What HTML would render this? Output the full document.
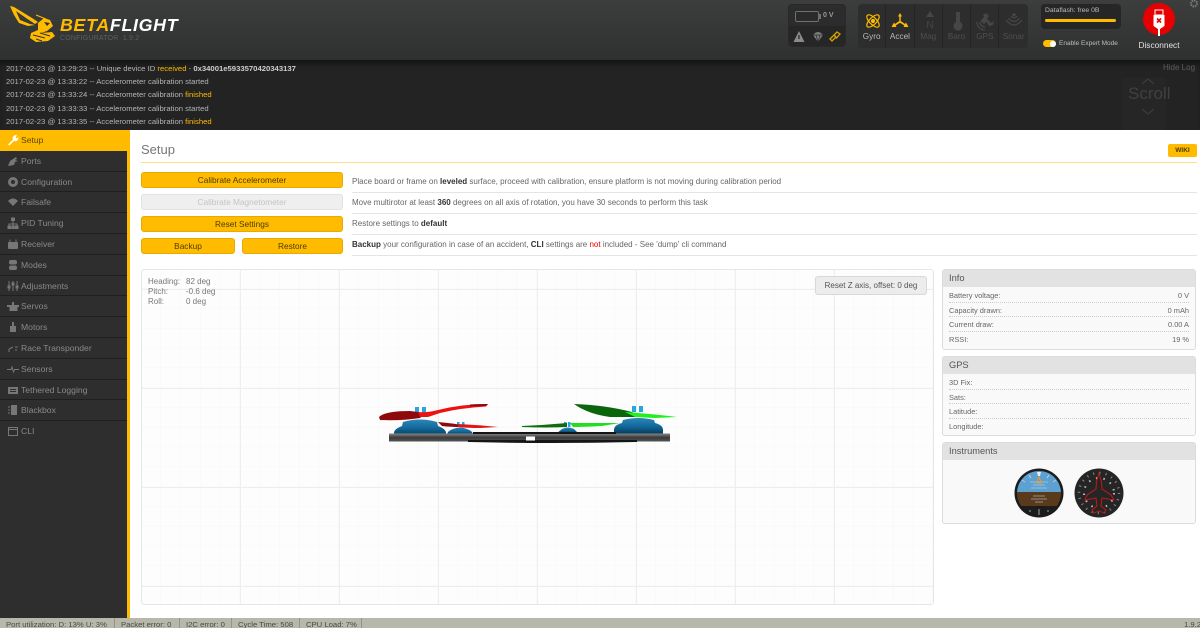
<!DOCTYPE html>
<html><head><meta charset="utf-8">
<style>
*{box-sizing:border-box}
html,body{margin:0;padding:0;width:1200px;height:628px;overflow:hidden;background:#fff;font-family:"Liberation Sans",sans-serif;font-size:8px;color:#555}
.a{position:absolute;white-space:nowrap}
#head{left:0;top:0;width:1200px;height:60px;background:linear-gradient(#3c3e3e,#2f3131)}
#log{left:0;top:60px;width:1200px;height:70px;background:#232323;box-shadow:inset 0 6px 6px -3px #111}
.l{position:absolute;left:6px;font-size:7.7px;line-height:13px;color:#b4b4b4;white-space:nowrap}
.l i{font-style:normal;color:#ffbb00}
.l b{color:#ccc}
#side{left:0;top:130px;width:130px;height:488px;background:#2e2e2e;border-right:3px solid #ffbb00}
.m{position:absolute;left:0;width:127px;height:20.8px;border-bottom:1px solid #1f1f1f;color:#8a8a8a;font-size:8.6px;line-height:21px;padding-left:21px;white-space:nowrap}
.m svg{position:absolute;left:7px;top:4px}
.btn{position:absolute;height:16px;background:#ffbb00;border:1px solid #e8aa00;border-radius:3px;color:#4a3c00;font-size:8.3px;line-height:14px;text-align:center}
.desc{position:absolute;left:352px;width:845px;height:21px;border-bottom:1px solid #e4e4e4;font-size:8px;line-height:20px;color:#666;white-space:nowrap}
.desc b{color:#333}
.panel{position:absolute;left:942px;width:254px;background:#f9f9f9;border:1px solid #dcdcdc;border-radius:3px;overflow:hidden}
.ph{height:17px;background:#e2e2e2;color:#555;font-size:9.3px;line-height:17px;padding-left:6px}
.r{position:absolute;left:6px;right:6px;height:14.5px;border-bottom:1px dotted #ccc;font-size:7.4px;line-height:15px;color:#666}
.r:last-child{border:0}
.r span{position:absolute;right:0}
.sen{position:absolute;top:0;width:28.3px;height:44px;border-right:1px solid #242424}
.sen div{position:absolute;left:0;right:0;top:28px;text-align:center;font-size:8.2px;color:#b9b9b9}
.sen.off div{color:#4f4f4f}
.sen svg{position:absolute;left:7px;top:9px}
#bar{left:0;top:618px;width:1200px;height:10px;background:#b7b7aa;font-size:7.7px;color:#4a4a40;line-height:13px;overflow:hidden}
.cell{position:absolute;top:0;height:10px;border-right:1px solid #94948a;white-space:nowrap}
</style></head><body>

<div class="a" id="head"></div>

<!-- logo -->
<svg class="a" style="left:0;top:0" width="60" height="45" viewBox="0 0 60 45">
<path d="M10 6 L14 7 L32 18 L38 22 L35 24 L26 18 L16 11 L20 20 L30 24 L35 25 L28 26 L19 23 L14 15Z" fill="#ffbb00"/>
<path d="M36 15 L46 19" stroke="#ffbb00" stroke-width="1" fill="none"/>
<path d="M38 23 L44 18 L50 20 L53 26 L47 31 L41 33 L52 32 L55 36 L48 41 L36 42 L30 38 L31 33 L38 30Z" fill="#ffbb00"/>
<path d="M44 22 L50 23 L47 26Z" fill="#333"/>
<path d="M33 35 L45 38 M40 33 L50 36 M36 39 L42 41" stroke="#333" stroke-width="1"/>
</svg>
<div class="a" style="left:60px;top:13px;font-size:17.8px;font-weight:bold;font-style:italic;color:#ffbb00;letter-spacing:.7px;line-height:24px">BETA<span style="color:#fff">FLIGHT</span></div>
<div class="a" style="left:60px;top:35px;font-size:7px;color:#5d5f5f;letter-spacing:.2px">CONFIGURATOR&nbsp; 1.9.2</div>

<!-- battery box -->
<div class="a" style="left:788px;top:4px;width:58px;height:43px;background:#2c2c2c;border-radius:4px;border:1px solid #292929"></div>
<div class="a" style="left:789px;top:26px;width:56px;height:20px;background:#262626;border-radius:0 0 4px 4px"></div>
<div class="a" style="left:795px;top:11px;width:24px;height:11px;border:1px solid #707070;border-radius:2px;background:#2a2a2a"></div>
<div class="a" style="left:819px;top:14px;width:2px;height:5px;background:#707070"></div>
<div class="a" style="left:823px;top:12px;font-size:7px;font-weight:bold;color:#999">0 V</div>
<svg class="a" style="left:793px;top:30px" width="48" height="13" viewBox="0 0 48 13">
<path d="M6 1 L11.500 12 H.5Z" fill="#8a8a8a"/><path d="M6 5V9" stroke="#2a2a2a" stroke-width="1.300"/>
<path d="M20 5 Q25 -1 30 5 L25 12Z" fill="#7e7e7e"/><path d="M20 5H30M23 5L25 12L27 5" stroke="#2a2a2a" stroke-width=".7" fill="none"/>
<path d="M37 9 L41 5 L43 7 L39 11Z M41 5 L44 2 L47 4 L43.500 8Z" fill="none" stroke="#d9a300" stroke-width="1.300"/>
</svg>

<!-- sensors -->
<div class="a" style="left:858px;top:4px;width:170px;height:44px;background:#2d2d2d;border-radius:4px;overflow:hidden">
 <div class="sen" style="left:0"><svg width="16" height="16" viewBox="0 0 16 16" fill="none" stroke="#ffbb00" stroke-width="1.200"><ellipse cx="8" cy="8" rx="8" ry="3.500" transform="rotate(45 8 8)"/><ellipse cx="8" cy="8" rx="8" ry="3.500" transform="rotate(-45 8 8)"/><circle cx="8" cy="8" r="1.500" fill="#ffbb00"/></svg><div>Gyro</div></div>
 <div class="sen" style="left:28.300px"><svg width="18" height="16" viewBox="0 0 18 16" fill="#ffbb00" style="left:5px"><path d="M9 0 L11 3.500 H9.700 V8 L14 11 L15 9.500 L17.500 14 L12.500 14 L13.300 12.500 L9 9.800 L4.700 12.500 L5.500 14 L.5 14 L3 9.500 L4 11 L8.300 8 V3.500 H7Z"/></svg><div>Accel</div></div>
 <div class="sen off" style="left:56.600px"><svg width="16" height="20" viewBox="0 0 16 20" fill="#464646" style="top:7px"><path d="M8 0 L12 6 H4Z"/><text x="8" y="17" font-size="10" text-anchor="middle" font-family="Liberation Sans" fill="#464646">N</text></svg><div>Mag</div></div>
 <div class="sen off" style="left:84.900px"><svg width="16" height="20" viewBox="0 0 16 20" style="top:7px"><path d="M6 1h4v10a4.500 4.500 0 1 1-4 0Z" fill="#464646"/></svg><div>Baro</div></div>
 <div class="sen off" style="left:113.200px"><svg width="18" height="18" viewBox="0 0 18 18" fill="#464646" style="left:5px"><path d="M7 2 L10 0 L13 3 L11 6 L15 10 L18 8 L17 12 L13 13Z"/><path d="M1 9 A8 8 0 0 0 9 17 M4 9 A5 5 0 0 0 9 14" stroke="#464646" fill="none" stroke-width="1.300"/><rect x="6" y="5" width="5" height="5" transform="rotate(45 8 7)"/></svg><div>GPS</div></div>
 <div class="sen off" style="left:141.500px;border:0"><svg width="18" height="16" viewBox="0 0 18 16" fill="none" stroke="#464646" stroke-width="1.300" style="left:5px"><path d="M1 7 Q9 17 17 7M3.500 5 Q9 12 14.500 5M6 3 Q9 7 12 3"/><path d="M7.500 1.500 Q9 .5 10.500 1.500 L9 3Z" fill="#464646"/></svg><div>Sonar</div></div>
</div>

<!-- dataflash -->
<div class="a" style="left:1041px;top:4px;width:80px;height:25px;background:#262626;border-radius:4px"></div>
<div class="a" style="left:1045px;top:7px;font-size:6.8px;color:#bbb">Dataflash: free 0B</div>
<div class="a" style="left:1045px;top:19px;width:71px;height:3px;background:#ffbb00;border-radius:2px"></div>
<div class="a" style="left:1043px;top:40px;width:13px;height:7px;background:#ffbb00;border-radius:4px"></div>
<div class="a" style="left:1050px;top:40.500px;width:6px;height:6px;background:#fff;border-radius:50%"></div>
<div class="a" style="left:1059px;top:40px;font-size:6.500px;color:#bdbdbd">Enable Expert Mode</div>

<!-- disconnect -->
<div class="a" style="left:1143px;top:3px;width:32px;height:32px;background:#e60000;border-radius:50%"></div>
<svg class="a" style="left:1152px;top:8px" width="14" height="28" viewBox="0 0 14 28">
<rect x="3" y="2" width="8" height="5" fill="none" stroke="#fff" stroke-width="1"/>
<path d="M1.500 7 H12.500 V18 L8 21 V28 H6 V21 L1.500 18Z" fill="#fff"/>
<path d="M5 10.500 L9 14.500 M9 10.500 L5 14.500" stroke="#e60000" stroke-width="1.600"/>
</svg>
<div class="a" style="left:1129px;top:40px;font-size:8.300px;color:#e2e2e2;width:60px;text-align:center">Disconnect</div>
<svg class="a" style="left:1190px;top:0" width="10" height="8" viewBox="0 0 10 8"><circle cx="4" cy="3.500" r="3" fill="none" stroke="#777" stroke-width="2" stroke-dasharray="1.500 .8"/></svg>

<!-- log -->
<div class="a" id="log">
 <div class="l" style="top:1.500px">2017-02-23 @ 13:29:23 -- Unique device ID <i>received</i> - <b>0x34001e5933570420343137</b></div>
 <div class="l" style="top:14.800px">2017-02-23 @ 13:33:22 -- Accelerometer calibration started</div>
 <div class="l" style="top:28.200px">2017-02-23 @ 13:33:24 -- Accelerometer calibration <i>finished</i></div>
 <div class="l" style="top:41.500px">2017-02-23 @ 13:33:33 -- Accelerometer calibration started</div>
 <div class="l" style="top:54.800px">2017-02-23 @ 13:33:35 -- Accelerometer calibration <i>finished</i></div>
</div>
<div class="a" style="left:1163px;top:63px;font-size:8px;color:#5e5e5e">Hide Log</div>
<div class="a" style="left:1122px;top:78px;width:44px;height:52px;background:#262626"></div>
<div class="a" style="left:1128px;top:84px;font-size:17px;color:#404040">Scroll</div>
<svg class="a" style="left:1140px;top:76px" width="16" height="40" viewBox="0 0 16 40" fill="none" stroke="#404040"><path d="M2 8 L8 3 L14 8M2 33 L8 38 L14 33"/></svg>

<!-- sidebar -->
<div class="a" id="side">
<div class="m" style="top:0;background:#ffbb00;color:#5a4600;border:0">Setup<svg width="12" height="12" viewBox="0 0 12 12"><path d="M1 10.500 L6 5.500 A3 3 0 0 1 10 1.500 L8.500 3.500 L9.500 4.500 L11.200 3 A3 3 0 0 1 7 6.800 L2.500 11.500Z" fill="#fff"/></svg></div>
<div class="m" style="top:20.800px">Ports<svg width="12" height="12" viewBox="0 0 12 12" fill="#777"><path d="M1 11 L3 6 L6 4 L9 2 L10 4 L8 5 L11 6 L8 7 L7 10 Z"/></svg></div>
<div class="m" style="top:41.600px">Configuration<svg width="12" height="12" viewBox="0 0 12 12"><circle cx="6" cy="6" r="3.500" fill="none" stroke="#777" stroke-width="3"/></svg></div>
<div class="m" style="top:62.400px">Failsafe<svg width="12" height="12" viewBox="0 0 12 12" fill="#777"><path d="M1 5 Q6 0 11 5 L6 10Z"/></svg></div>
<div class="m" style="top:83.200px">PID Tuning<svg width="12" height="12" viewBox="0 0 12 12" fill="none" stroke="#777"><path d="M6 2V7M2 10V7H10V10M6 7V10"/><rect x="4.500" y="1" width="3" height="2.500" fill="#777"/><rect x="1" y="9" width="2.500" height="2.500" fill="#777"/><rect x="4.800" y="9" width="2.500" height="2.500" fill="#777"/><rect x="8.500" y="9" width="2.500" height="2.500" fill="#777"/></svg></div>
<div class="m" style="top:104px">Receiver<svg width="12" height="12" viewBox="0 0 12 12" fill="#777"><rect x="1" y="4" width="10" height="7" rx="1"/><path d="M3 4V1.500M9 4V1.500" stroke="#777"/></svg></div>
<div class="m" style="top:124.800px">Modes<svg width="12" height="12" viewBox="0 0 12 12" fill="#777"><rect x="2" y="1" width="8" height="4.500" rx="2"/><rect x="2" y="6.500" width="8" height="4.500" rx="2"/></svg></div>
<div class="m" style="top:145.600px">Adjustments<svg width="12" height="12" viewBox="0 0 12 12" stroke="#777" fill="#777"><path d="M2 1V11M6 1V11M10 1V11" fill="none"/><rect x="1" y="6" width="2" height="2"/><rect x="5" y="3" width="2" height="2"/><rect x="9" y="6" width="2" height="2"/></svg></div>
<div class="m" style="top:166.400px">Servos<svg width="12" height="12" viewBox="0 0 12 12" fill="#777"><path d="M0 5H12V7H10.500V11H2.500V7H0Z"/><rect x="5" y="2" width="2" height="3"/></svg></div>
<div class="m" style="top:187.200px">Motors<svg width="12" height="12" viewBox="0 0 12 12" fill="#777"><path d="M5 1H7V5H9V11H3V5H5Z"/></svg></div>
<div class="m" style="top:208px">Race Transponder<svg width="12" height="12" viewBox="0 0 12 12" fill="none" stroke="#777"><path d="M2 10V7L6 5M8 5H11M8 8H10"/></svg></div>
<div class="m" style="top:228.800px">Sensors<svg width="12" height="12" viewBox="0 0 12 12" fill="none" stroke="#777"><path d="M0 6.500H4L5 4L6.500 9L7.500 6.500H12"/></svg></div>
<div class="m" style="top:249.600px">Tethered Logging<svg width="12" height="12" viewBox="0 0 12 12" fill="#777"><rect x="1" y="3" width="10" height="7"/><path d="M3 5.500H9M3 7.500H9" stroke="#2e2e2e"/></svg></div>
<div class="m" style="top:270.400px">Blackbox<svg width="12" height="12" viewBox="0 0 12 12" fill="#777"><rect x="4" y="1" width="6" height="10"/><path d="M1 3H3M1 6H3M1 9H3" stroke="#777"/></svg></div>
<div class="m" style="top:291.200px;border:0">CLI<svg width="12" height="12" viewBox="0 0 12 12" fill="none" stroke="#777"><rect x="1.500" y="2.500" width="9" height="8"/><path d="M1.500 4.500H10.500"/></svg></div>
</div>

<!-- content -->
<div class="a" style="left:141px;top:142px;font-size:13px;color:#777;line-height:16px">Setup</div>
<div class="a" style="left:141px;top:162px;width:1056px;height:1px;background:#ffdf85"></div>
<div class="a" style="left:1168px;top:144px;width:29px;height:13px;background:#ffbb00;border-radius:2px;color:#4a3c00;font-size:6.500px;font-weight:bold;line-height:13px;text-align:center">WIKI</div>

<div class="btn" style="left:141px;top:172px;width:202px">Calibrate Accelerometer</div>
<div class="btn" style="left:141px;top:194px;width:202px;background:#efefef;border-color:#e2e2e2;color:#c4c4c4">Calibrate Magnetometer</div>
<div class="btn" style="left:141px;top:216px;width:202px">Reset Settings</div>
<div class="btn" style="left:141px;top:238px;width:94px">Backup</div>
<div class="btn" style="left:242px;top:238px;width:101px">Restore</div>

<div class="desc" style="top:172px">Place board or frame on <b>leveled</b> surface, proceed with calibration, ensure platform is not moving during calibration period</div>
<div class="desc" style="top:193px">Move multirotor at least <b>360</b> degrees on all axis of rotation, you have 30 seconds to perform this task</div>
<div class="desc" style="top:214px">Restore settings to <b>default</b></div>
<div class="desc" style="top:235px"><b>Backup</b> your configuration in case of an accident, <b>CLI</b> settings are <span style="color:#e60000">not</span> included - See 'dump' cli command</div>

<!-- grid -->
<svg class="a" style="left:141px;top:269px" width="793" height="336">
<defs>
<pattern id="g1" x="0" y="0" width="19.800" height="19.800" patternUnits="userSpaceOnUse"><path d="M19.800 0V19.800H0" fill="none" stroke="#f6f6f6" stroke-width="1"/></pattern>
</defs>
<rect x=".5" y=".5" width="792" height="335" rx="3" fill="#fdfdfd" stroke="#e6e6e6"/>
<rect x="1" y="1" width="791" height="334" fill="url(#g1)"/>
<path d="M99.500 1V335M198.500 1V335M297.500 1V335M396.500 1V335M495.500 1V335M594.500 1V335M693.500 1V335M1 20.500H792M1 119.500H792M1 218.500H792M1 317.500H792" stroke="#eeeeee" fill="none"/>
</svg>
<div class="a" style="left:148px;top:277px;font-size:8px;color:#777;line-height:10px">Heading:<br>Pitch:<br>Roll:</div>
<div class="a" style="left:186px;top:277px;font-size:8px;color:#777;line-height:10px">82 deg<br>-0.6 deg<br>0 deg</div>
<div class="a" style="left:815px;top:276px;width:112px;height:19px;background:#ececec;border:1px solid #d8d8d8;border-radius:3px;font-size:8px;line-height:18px;text-align:center;color:#555">Reset Z axis, offset: 0 deg</div>

<!-- quad -->
<svg class="a" style="left:370px;top:390px" width="320" height="70" viewBox="0 0 320 70">
<defs>
<linearGradient id="mot" x1="0" y1="0" x2="0" y2="1"><stop offset="0" stop-color="#2d86b8"/><stop offset=".5" stop-color="#136a9c"/><stop offset="1" stop-color="#063c5c"/></linearGradient>
<linearGradient id="fr" x1="0" y1="0" x2="0" y2="1"><stop offset="0" stop-color="#888"/><stop offset=".5" stop-color="#3a3a3a"/><stop offset="1" stop-color="#555"/></linearGradient>
</defs>
<rect x="45" y="17" width="4" height="6" fill="#29a6e0"/><rect x="52" y="17" width="4" height="6" fill="#29a6e0"/>
<rect x="87" y="32" width="2.500" height="5" fill="#29a6e0"/><rect x="92" y="32" width="2.500" height="5" fill="#29a6e0"/>
<rect x="194" y="32" width="2.500" height="5" fill="#29a6e0"/><rect x="198" y="32" width="2.500" height="5" fill="#29a6e0"/>
<rect x="262" y="16" width="4" height="6" fill="#29a6e0"/><rect x="269" y="16" width="4" height="6" fill="#29a6e0"/>
<path d="M33 32 Q50 27 67 32 L68 36 Q76 39 76 43 V46 H24 V43 Q24 39 32 36Z" fill="url(#mot)"/>
<path d="M83 39 Q90 36 97 39 Q103 41 103 45 H77 Q77 41 83 39Z" fill="url(#mot)"/>
<path d="M192 39 Q198 36 204 39 L208 43 H187Z" fill="url(#mot)"/>
<path d="M253 30 Q268 26 284 30 L285 33 Q293 35 293 40 V44 H244 V40 Q244 35 252 33Z" fill="url(#mot)"/>
<path d="M68 32 Q80 33 92 35 L92 37 Q80 37 72 36Z" fill="#8e0a0a"/>
<path d="M88 34 Q110 35 128 37 L110 38 Q98 38 88 37Z" fill="#e01515"/>
<path d="M9 27 Q15 21 40 21 L56 23 L50 28 Q30 31 10 30Z" fill="#8e0a0a"/>
<path d="M48 22 Q56 23 68 20 Q92 14 118 14 L116 16.500 Q90 18 70 23 L58 27 L50 27Z" fill="#ee1111"/>
<path d="M100 14.500 Q110 14 118 14 L116 16 Q108 16 100 16.500Z" fill="#8e0a0a"/>
<path d="M152 36 Q175 35 197 33 L197 37 Q175 38 152 37Z" fill="#0f6c0f"/>
<path d="M200 33 Q225 33 250 33 L232 36 Q212 37 203 37Z" fill="#22dd22"/>
<path d="M204 14 Q235 15 262 22 L270 27 L240 27 Q218 24 204 14Z" fill="#0b660b"/>
<path d="M255 22 Q285 24 307 27 L285 28 L265 27Z" fill="#22ee22"/>
<rect x="19" y="43.500" width="281" height="8" fill="url(#fr)"/>
<path d="M103 42 H246 V44 H103Z" fill="#151515"/>
<path d="M98 50 H267 V52 Q180 54 98 52Z" fill="#151515"/>
<rect x="156" y="46.500" width="9" height="4" fill="#fff"/>
</svg>

<!-- panels -->
<div class="panel" style="top:269px;height:81px"><div class="ph">Info</div>
 <div class="r" style="top:18px">Battery voltage:<span>0 V</span></div>
 <div class="r" style="top:32.500px">Capacity drawn:<span>0 mAh</span></div>
 <div class="r" style="top:47px">Current draw:<span>0.00 A</span></div>
 <div class="r" style="top:61.500px">RSSI:<span>19 %</span></div>
</div>
<div class="panel" style="top:356px;height:80px"><div class="ph">GPS</div>
 <div class="r" style="top:18px">3D Fix:</div>
 <div class="r" style="top:32.500px">Sats:</div>
 <div class="r" style="top:47px">Latitude:</div>
 <div class="r" style="top:61.500px">Longitude:</div>
</div>
<div class="panel" style="top:442px;height:82px"><div class="ph">Instruments</div></div>

<!-- instruments -->
<svg class="a" style="left:1014px;top:468px" width="50" height="50" viewBox="0 0 50 50">
<defs><clipPath id="att"><circle cx="25" cy="25" r="22"/></clipPath></defs>
<circle cx="25" cy="25" r="24.500" fill="#1c1c1c"/>
<g clip-path="url(#att)">
<rect x="0" y="0" width="50" height="24" fill="#5da0d2"/>
<rect x="0" y="24" width="50" height="14" fill="#5a3a1c"/>
<rect x="0" y="38" width="50" height="12" fill="#1c1c1c"/>
</g>
<path d="M16 14H34M19 17H31M17 20H33M19 28H31M17 31H33M21 34H29" stroke="#cfe0ea" stroke-width=".6"/>
<path d="M25 9 L27.500 15 H22.500Z" fill="none" stroke="#f09a20" stroke-width="1"/>
<path d="M23 4H27L26 8H24Z" fill="#e8eef2"/>
<path d="M25 41V47M16 42V44M34 42V44M8 12L11 14M42 12L39 14M15 7L17 10M35 7L33 10" stroke="#ddd" stroke-width=".7"/>
</svg>
<svg class="a" style="left:1074px;top:468px" width="50" height="50" viewBox="0 0 50 50">
<circle cx="25" cy="25" r="24.500" fill="#252525"/>
<circle cx="25" cy="25" r="20" fill="none" stroke="#888" stroke-width="2.500" stroke-dasharray="1 5.300"/>
<circle cx="25" cy="25" r="15" fill="none" stroke="#bbb" stroke-width="2" stroke-dasharray="1.500 6"/>
<path d="M25 5 L27.500 14 L28 21 L37 27 L40 32 L28 30 L27 38 L32 42 L30 45 L25 43 L20 45 L18 42 L23 38 L22 30 L11 32 L13 27 L22 21 L22.500 14Z" fill="#252525" stroke="#b51a1a" stroke-width="1.100"/>
</svg>

<!-- status bar -->
<div class="a" id="bar">
 <div class="cell" style="left:0;width:115px;padding-left:6px">Port utilization: D: 13% U: 3%</div>
 <div class="cell" style="left:115px;width:65px;padding-left:6px">Packet error: 0</div>
 <div class="cell" style="left:180px;width:52px;padding-left:6px">I2C error: 0</div>
 <div class="cell" style="left:232px;width:68px;padding-left:6px">Cycle Time: 508</div>
 <div class="cell" style="left:300px;width:62px;padding-left:6px">CPU Load: 7%</div>
 <div class="a" style="left:1184px;top:0">1.9.2</div>
</div>
</body></html>
